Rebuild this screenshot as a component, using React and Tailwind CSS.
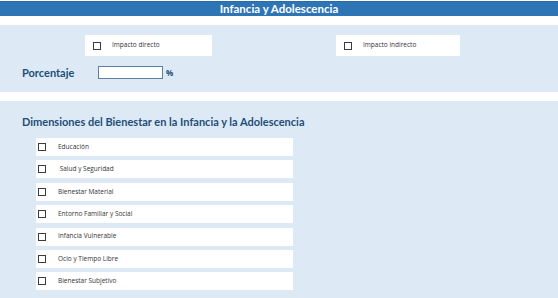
const dimensiones = [
  "Educación",
  "\u00a0Salud y Seguridad",
  "Bienestar Material",
  "Entorno Familiar y Social",
  "Infancia Vulnerable",
  "Ocio y Tiempo Libre",
  "Bienestar Subjetivo",
];

function Box() {
  return <div className="w-[8px] h-[8px] border-[1.5px] border-[#3c3c3c] bg-white shrink-0" />;
}

function OptionBox({ label, width, className = "" }) {
  return (
    <div className={`flex items-center h-[21px] bg-white pl-[8px] ${width} ${className}`}>
      <Box />
      <span className="ml-[11px] text-[6.5px] leading-none text-[#333]">{label}</span>
    </div>
  );
}

export default function App() {
  return (
    <div className="w-[558px] h-[298px] bg-white overflow-hidden font-['Open_Sans','Noto_Sans',sans-serif]">
      <div className="mt-px h-[15px] bg-[#2e75b6] border-t border-[#2a6aa6] flex items-center justify-center">
        <span className="text-white font-bold text-[11.5px] leading-none font-['Lato',sans-serif]">Infancia y Adolescencia</span>
      </div>

      <div className="mt-[9px] h-[67px] bg-[#ddeaf6] pt-[10px]">
        <div className="flex pl-[85px]">
          <OptionBox label="Impacto directo" width="w-[127px]" />
          <OptionBox label="Impacto indirecto" width="w-[124px]" className="ml-[124px] pl-[6px]" />
        </div>
        <div className="flex items-center mt-[10px] pl-[22px] h-[13px]">
          <span className="w-[76px] text-[11px] font-bold text-[#1f4e79] leading-none font-['Lato',sans-serif]">Porcentaje</span>
          <div className="w-[65px] h-[13px] bg-white border border-[#5a7fa3]" />
          <span className="ml-[3px] text-[8px] font-bold text-[#1f4e79] leading-none">%</span>
        </div>
      </div>

      <div className="mt-[9px] h-[197px] bg-[#ddeaf6] pt-[13px]">
        <div className="pl-[22px] text-[11px] font-bold text-[#1f4e79] leading-[15px] font-['Lato',sans-serif]">
          Dimensiones del Bienestar en la Infancia y la Adolescencia
        </div>
        <div className="flex flex-col gap-[4.4px] mt-[9px] pl-[36px]">
          {dimensiones.map((d) => (
            <div key={d} className="flex items-center w-[257px] h-[18px] bg-white pl-[2px]">
              <Box />
              <span className="ml-[12px] text-[6.5px] leading-none text-[#333] whitespace-pre">{d}</span>
            </div>
          ))}
        </div>
      </div>
    </div>
  );
}
